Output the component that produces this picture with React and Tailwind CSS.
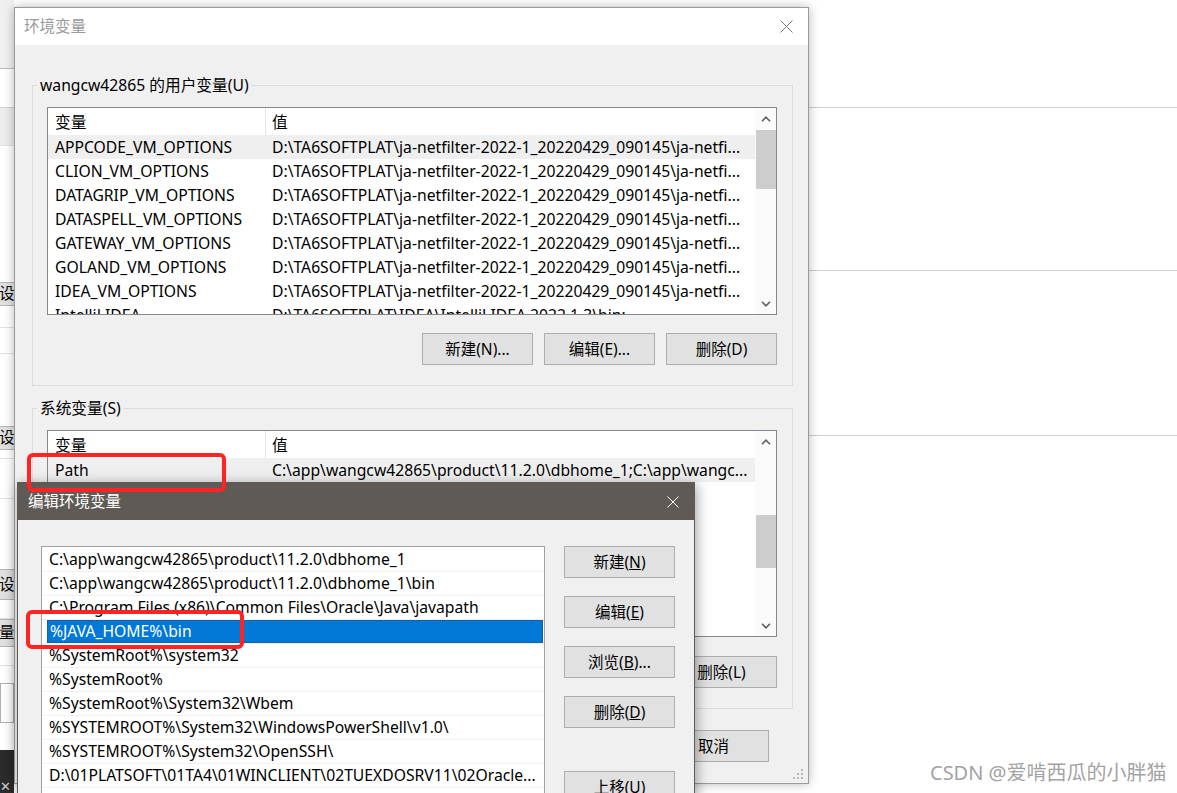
import React from "react";

const F = "font-['Noto_Sans','Noto_Sans_CJK_SC',sans-serif]";

function Chevron({ up }) {
  return (
    <svg width="10" height="6" viewBox="0 0 10 6">
      <path d={up ? "M1 5.2L5 1.2L9 5.2" : "M1 0.8L5 4.8L9 0.8"} fill="none" stroke="#606060" strokeWidth="1.6" />
    </svg>
  );
}

function XIcon({ color, size }) {
  return (
    <svg width={size} height={size} viewBox={`0 0 ${size} ${size}`}>
      <path d={`M0.5 0.5L${size - 0.5} ${size - 0.5}M${size - 0.5} 0.5L0.5 ${size - 0.5}`} stroke={color} strokeWidth="1" fill="none" />
    </svg>
  );
}

function Btn({ children, className = "" }) {
  return (
    <div className={`w-[111px] h-[32px] shrink-0 border border-[#adadad] bg-[#e1e1e1] flex items-center justify-center pt-[2px] text-[15.5px] text-black leading-none ${className}`}>
      {children}
    </div>
  );
}

const userVars = [
  ["APPCODE_VM_OPTIONS", "D:\\TA6SOFTPLAT\\ja-netfilter-2022-1_20220429_090145\\ja-netfi..."],
  ["CLION_VM_OPTIONS", "D:\\TA6SOFTPLAT\\ja-netfilter-2022-1_20220429_090145\\ja-netfi..."],
  ["DATAGRIP_VM_OPTIONS", "D:\\TA6SOFTPLAT\\ja-netfilter-2022-1_20220429_090145\\ja-netfi..."],
  ["DATASPELL_VM_OPTIONS", "D:\\TA6SOFTPLAT\\ja-netfilter-2022-1_20220429_090145\\ja-netfi..."],
  ["GATEWAY_VM_OPTIONS", "D:\\TA6SOFTPLAT\\ja-netfilter-2022-1_20220429_090145\\ja-netfi..."],
  ["GOLAND_VM_OPTIONS", "D:\\TA6SOFTPLAT\\ja-netfilter-2022-1_20220429_090145\\ja-netfi..."],
  ["IDEA_VM_OPTIONS", "D:\\TA6SOFTPLAT\\ja-netfilter-2022-1_20220429_090145\\ja-netfi..."],
  ["IntelliJ IDEA", "D:\\TA6SOFTPLAT\\IDEA\\IntelliJ IDEA 2022.1.3\\bin;"],
];

const pathRows = [
  "C:\\app\\wangcw42865\\product\\11.2.0\\dbhome_1",
  "C:\\app\\wangcw42865\\product\\11.2.0\\dbhome_1\\bin",
  "C:\\Program Files (x86)\\Common Files\\Oracle\\Java\\javapath",
  "%JAVA_HOME%\\bin",
  "%SystemRoot%\\system32",
  "%SystemRoot%",
  "%SystemRoot%\\System32\\Wbem",
  "%SYSTEMROOT%\\System32\\WindowsPowerShell\\v1.0\\",
  "%SYSTEMROOT%\\System32\\OpenSSH\\",
  "D:\\01PLATSOFT\\01TA4\\01WINCLIENT\\02TUEXDOSRV11\\02Oracle...",
  "",
];

function VarList({ rows, heightClass, thumbTop, thumbH, highlight }) {
  return (
    <div className={`${heightClass} border border-[#828790] bg-white flex overflow-hidden text-[15.7px] text-black`}>
      <div className="flex-1 flex flex-col min-w-0">
        <div className="h-[27px] shrink-0 flex">
          <div className="w-[218px] shrink-0 pl-[7px] pt-[3px] flex items-center border-r border-[#e5e5e5]">变量</div>
          <div className="flex-1 pl-[6px] pt-[3px] flex items-center">值</div>
        </div>
        {rows.map((r, i) => (
          <div key={i} className={`h-[24px] shrink-0 flex items-center whitespace-nowrap pt-[2px] ${i === highlight ? "bg-[#efefef]" : ""}`}>
            <div className="w-[218px] shrink-0 pl-[7px] overflow-hidden">{r[0]}</div>
            <div className="flex-1 pl-[6px] overflow-hidden">{r[1]}</div>
          </div>
        ))}
      </div>
      <div className="w-[21px] shrink-0 bg-[#fafafa] flex flex-col">
        <div className="h-[21px] flex items-center justify-center">
          <Chevron up />
        </div>
        <div className="flex-1 relative">
          <div className="mx-auto w-[20px] bg-[#cdcdcd]" style={{ marginTop: thumbTop, height: thumbH }} />
        </div>
        <div className="h-[21px] flex items-center justify-center">
          <Chevron />
        </div>
      </div>
    </div>
  );
}

function StripButton({ label, h }) {
  return (
    <div className={`${h} shrink-0 bg-[#e1e1e1] border-y border-[#b5b5b5] flex items-center overflow-hidden whitespace-nowrap text-[15.5px] text-black -ml-[1px]`}>
      {label}
    </div>
  );
}

export default function App() {
  return (
    <div className={`relative w-[1177px] h-[793px] overflow-hidden bg-white ${F}`}>
      {/* background page */}
      <div className="flex h-full">
        <div className="w-[14px] shrink-0 flex flex-col overflow-hidden">
          <div className="h-[68px] shrink-0 bg-[#f0f0f0]" />
          <div className="h-[1px] shrink-0 bg-[#bdbdbd]" />
          <div className="h-[38px] shrink-0 bg-white" />
          <div className="h-[38px] shrink-0 bg-[#ececec] border-t border-[#d0d0d0]" />
          <div className="h-[137px] shrink-0 bg-white border-t border-[#e3e3e3]" />
          <StripButton label="设置" h="h-[24px]" />
          <div className="h-[22px] shrink-0 bg-white border-b border-[#e3e3e3]" />
          <div className="h-[26px] shrink-0 bg-white border-b border-[#e3e3e3]" />
          <div className="h-[72px] shrink-0 bg-white" />
          <StripButton label="设置" h="h-[24px]" />
          <div className="h-[9px] shrink-0 bg-white border-b border-[#e3e3e3]" />
          <div className="h-[40px] shrink-0 bg-white border-b border-[#e3e3e3]" />
          <div className="h-[70px] shrink-0 bg-white" />
          <StripButton label="设置" h="h-[31px]" />
          <div className="h-[19px] shrink-0 bg-white border-b border-[#e3e3e3]" />
          <StripButton label="量" h="h-[28px]" />
          <div className="h-[19px] shrink-0 bg-white border-b border-[#e3e3e3]" />
          <div className="h-[17px] shrink-0 bg-white" />
          <div className="h-[40px] shrink-0 bg-white border border-[#b0b0b0]" />
          <div className="h-[27px] shrink-0 bg-white" />
          <div className="flex-1 bg-[#2b2b2b] text-[#cfcfcf] text-[13px] leading-none flex items-end">✕</div>
        </div>
        <div className="flex-1" />
        <div className="w-[369px] shrink-0 flex flex-col">
          <div className="h-[107px] shrink-0" />
          <div className="h-[163px] shrink-0 border-t border-[#cfcfcf]" />
          <div className="h-[165px] shrink-0 border-t border-[#cfcfcf]" />
          <div className="flex-1 border-t border-[#cfcfcf]" />
        </div>
      </div>

      {/* main dialog: 环境变量 */}
      <div className="absolute left-[14px] top-[7px] w-[795px] h-[777px] border border-[#9a9a9a] bg-[#f0f0f0] flex flex-col shadow-[0_0_10px_rgba(0,0,0,0.28)]">
        <div className="h-[37px] shrink-0 bg-white flex items-center justify-between pl-[9px] pr-[15px]">
          <span className="text-[15.5px] text-[#9a9a9a]">环境变量</span>
          <XIcon color="#7a7a7a" size={13} />
        </div>
        <div className="flex-1 flex flex-col pl-[17px] pr-[15px] pt-[30px]">
          <fieldset className="border border-[#dcdcdc] pl-[14px] pr-[15px] pb-[20px]">
            <legend className="-ml-[10px] px-[3px] text-[15.7px] leading-[20px] text-black">wangcw42865 的用户变量(U)</legend>
            <div className="mt-[12px]">
              <VarList rows={userVars} heightClass="h-[208px]" thumbTop={1} thumbH={59} highlight={0} />
            </div>
            <div className="mt-[18px] flex justify-end gap-[11px]">
              <Btn>新建(N)...</Btn>
              <Btn>编辑(E)...</Btn>
              <Btn>删除(D)</Btn>
            </div>
          </fieldset>
          <fieldset className="mt-[12px] border border-[#dcdcdc] pl-[14px] pr-[15px] pb-[20px]">
            <legend className="-ml-[10px] px-[3px] text-[15.7px] leading-[20px] text-black">系统变量(S)</legend>
            <div className="mt-[12px]">
              <VarList rows={[["Path", "C:\\app\\wangcw42865\\product\\11.2.0\\dbhome_1;C:\\app\\wangc..."], ["", ""], ["", ""], ["", ""], ["", ""], ["", ""], ["", ""]]} heightClass="h-[207px]" thumbTop={63} thumbH={53} highlight={0} />
            </div>
            <div className="mt-[19px] flex justify-end gap-[11px]">
              <Btn>新建(W)...</Btn>
              <Btn>编辑(I)...</Btn>
              <Btn>删除(L)</Btn>
            </div>
          </fieldset>
          <div className="mt-[21px] flex justify-end gap-[11px] pr-[24px]">
            <Btn>确定</Btn>
            <Btn>取消</Btn>
          </div>
        </div>
        <svg className="absolute right-[4px] bottom-[3px]" width="11" height="11" viewBox="0 0 11 11">
          <g fill="#b9b9b9">
            <rect x="8" y="0" width="2" height="2" />
            <rect x="4" y="4" width="2" height="2" />
            <rect x="8" y="4" width="2" height="2" />
            <rect x="0" y="8" width="2" height="2" />
            <rect x="4" y="8" width="2" height="2" />
            <rect x="8" y="8" width="2" height="2" />
          </g>
        </svg>
      </div>

      {/* edit dialog: 编辑环境变量 */}
      <div className="absolute left-[17px] top-[482px] w-[678px] h-[330px] border border-[#5f5a56] bg-[#f0f0f0] flex flex-col shadow-[2px_2px_12px_rgba(0,0,0,0.35)]">
        <div className="h-[37px] shrink-0 bg-[#5f5a56] flex items-center justify-between pl-[10px] pr-[15px]">
          <span className="text-[15.5px] text-white">编辑环境变量</span>
          <XIcon color="#ffffff" size={12} />
        </div>
        <div className="flex-1 flex pl-[23px] pt-[26px] gap-[19px]">
          <div className="w-[504px] shrink-0 border border-[#a0a0a0] bg-white overflow-hidden pt-[1px] text-[15.7px] text-black">
            {pathRows.map((t, i) => (
              <div key={i} className="h-[24px] mx-[1px] border-b border-[#f0f0f0] flex">
                <div className={`flex-1 ml-[4px] pl-[2px] pt-[1px] flex items-center whitespace-nowrap overflow-hidden ${i === 3 ? "bg-[#0078d7] text-white border border-dotted border-[#2a4a6a]" : ""}`}>
                  {t}
                </div>
              </div>
            ))}
          </div>
          <div className="flex flex-col">
            <Btn>新建(<span className="underline">N</span>)</Btn>
            <Btn className="mt-[18px]">编辑(<span className="underline">E</span>)</Btn>
            <Btn className="mt-[18px]">浏览(<span className="underline">B</span>)...</Btn>
            <Btn className="mt-[18px]">删除(<span className="underline">D</span>)</Btn>
            <Btn className="mt-[43px]">上移(<span className="underline">U</span>)</Btn>
          </div>
        </div>
      </div>

      {/* red annotations */}
      <div className="absolute left-[27px] top-[453px] w-[199px] h-[39px] border-[4px] border-[#ff2323] rounded-[6px]" />
      <div className="absolute left-[26px] top-[610px] w-[218px] h-[39px] border-[4px] border-[#ff2323] rounded-[6px]" />

      {/* watermark */}
      <div className="absolute left-[930px] top-[760px] text-[20px] leading-[26px] text-[#a3a3a3] whitespace-nowrap">
        CSDN @爱啃西瓜的小胖猫
      </div>
    </div>
  );
}
